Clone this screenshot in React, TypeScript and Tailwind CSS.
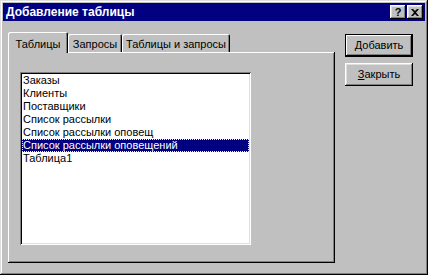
import React from "react";

const raised =
  "shadow-[inset_-1px_-1px_#000,inset_1px_1px_#fff,inset_-2px_-2px_#808080,inset_2px_2px_#dfdfdf]";

function TitleBtn({ children }: { children: React.ReactNode }) {
  return (
    <div
      className={`w-[16px] h-[14px] bg-[#c0c0c0] ${raised} flex items-center justify-center text-black font-bold text-[11px] leading-none`}
    >
      {children}
    </div>
  );
}

export default function App() {
  const items = [
    "Заказы",
    "Клиенты",
    "Поставщики",
    "Список рассылки",
    "Список рассылки оповещ",
    "Список рассылки оповещений",
    "Таблица1",
  ];
  return (
    <div
      className="w-[428px] h-[275px] bg-[#c0c0c0] p-[3px] flex flex-col shadow-[inset_-1px_-1px_#000,inset_1px_1px_#dfdfdf,inset_-2px_-2px_#808080,inset_2px_2px_#fff] text-black"
      style={{ fontFamily: '"Liberation Sans", Arial, sans-serif' }}
    >
      <div className="h-[18px] bg-[#000080] flex items-center pl-[3px] pr-[2px]">
        <span className="text-white font-bold text-[12px] leading-none">
          Добавление таблицы
        </span>
        <div className="ml-auto flex gap-[1px]">
          <TitleBtn>?</TitleBtn>
          <TitleBtn>
            <svg width="8" height="7" viewBox="0 0 8 7">
              <path d="M0 0h2l2 2 2-2h2L5 3.5 8 7H6L4 5 2 7H0l3-3.5z" fill="#000" />
            </svg>
          </TitleBtn>
        </div>
      </div>
      <div className="flex-1 flex pl-[5px] pt-[11px]">
        <div className="w-[327px] flex flex-col">
          <div className="h-[20px] flex items-end text-[11px]">
            <div className="relative z-10 w-[60px] h-[21px] mb-[-1px] bg-[#c0c0c0] rounded-t-[2px] shadow-[inset_1px_1px_#fff,inset_-1px_0_#000,inset_-2px_0_#808080] flex items-start justify-center pt-[4px]">
              Таблицы
            </div>
            <div className="w-[54px] h-[18px] bg-[#c0c0c0] rounded-t-[2px] shadow-[inset_1px_1px_#fff,inset_-1px_0_#000,inset_-2px_0_#808080] flex items-start justify-center pt-[2px]">
              Запросы
            </div>
            <div className="w-[108px] h-[18px] bg-[#c0c0c0] rounded-t-[2px] shadow-[inset_1px_1px_#fff,inset_-1px_0_#000,inset_-2px_0_#808080] flex items-start justify-center pt-[2px]">
              Таблицы и запросы
            </div>
          </div>
          <div className="h-[211px] bg-[#c0c0c0] shadow-[inset_-1px_-1px_#000,inset_1px_1px_#fff,inset_-2px_-2px_#808080] pt-[20px] pl-[12px]">
            <div className="w-[231px] h-[173px] bg-white p-[2px] shadow-[inset_1px_1px_#808080,inset_-1px_-1px_#fff,inset_2px_2px_#000,inset_-2px_-2px_#dfdfdf]">
              {items.map((t, i) => (
                <div
                  key={i}
                  className={
                    i === 5
                      ? "h-[13px] bg-[#000080] text-white text-[11px] leading-[13px] pl-[1px] outline-1 outline-dotted outline-[#ffff80] -outline-offset-1 whitespace-nowrap"
                      : "h-[13px] text-[11px] leading-[13px] pl-[1px] whitespace-nowrap"
                  }
                >
                  {t}
                </div>
              ))}
            </div>
          </div>
        </div>
        <div className="ml-[10px] pt-[2px] flex flex-col gap-[6px] text-[11px]">
          <div className="w-[68px] h-[23px] bg-[#c0c0c0] border border-black shadow-[inset_-1px_-1px_#000,inset_1px_1px_#fff,inset_-2px_-2px_#808080] flex items-center justify-center">
            <span>
              <span className="underline">Д</span>обавить
            </span>
          </div>
          <div className={`w-[68px] h-[23px] bg-[#c0c0c0] ${raised} flex items-center justify-center`}>
            <span>
              <span className="underline">З</span>акрыть
            </span>
          </div>
        </div>
      </div>
    </div>
  );
}
